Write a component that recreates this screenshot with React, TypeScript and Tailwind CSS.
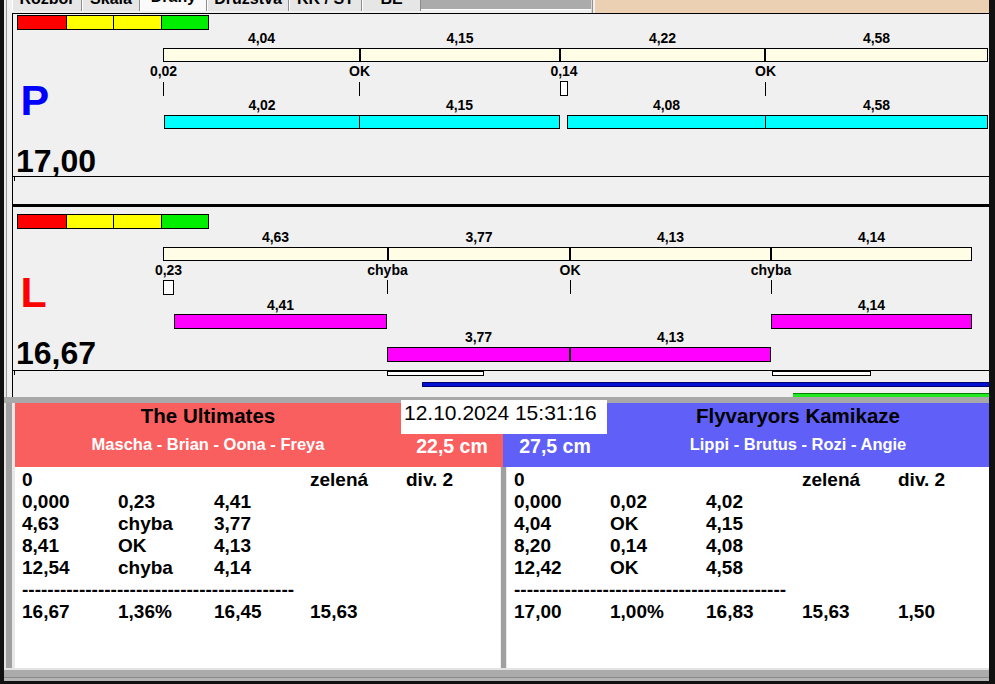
import React from "react";

const X0 = 13;

type Seg = [number, number];

function Box({ x1, x2, y1, y2, y0, cls }: { x1: number; x2: number; y1: number; y2: number; y0: number; cls: string }) {
  return <div className={`absolute ${cls}`} style={{ left: x1 - X0, top: y1 - y0, width: x2 - x1, height: y2 - y1 }} />;
}

function Lbl({ cx, top, y0, text }: { cx: number; top: number; y0: number; text: string }) {
  return (
    <div
      className="absolute w-[80px] text-center text-[14px] leading-[16px] font-bold text-black whitespace-nowrap"
      style={{ left: cx - X0 - 40, top: top - y0 }}
    >
      {text}
    </div>
  );
}

function ColorBar({ top, y0 }: { top: number; y0: number }) {
  return (
    <div className="absolute flex h-[15px] border border-black" style={{ left: 17 - X0, top: top - y0 }}>
      <div className="w-[48px] bg-[#ff0000]" />
      <div className="w-[47px] bg-[#ffff00] border-l border-black" />
      <div className="w-[48px] bg-[#ffff00] border-l border-black" />
      <div className="w-[47px] bg-[#00ee00] border-l border-black" />
    </div>
  );
}

function Segs({ segs, y1, y2, y0, cls }: { segs: Seg[]; y1: number; y2: number; y0: number; cls: string }) {
  return (
    <>
      {segs.map(([a, b], i) => (
        <Box key={i} x1={a} x2={b} y1={y1} y2={y2} y0={y0} cls={`border border-black ${cls}`} />
      ))}
    </>
  );
}

function Labels({ items, top, y0 }: { items: [number, string][]; top: number; y0: number }) {
  return (
    <>
      {items.map(([cx, t], i) => (
        <Lbl key={i} cx={cx} top={top} y0={y0} text={t} />
      ))}
    </>
  );
}

function Ticks({ xs, y1, y2, y0 }: { xs: number[]; y1: number; y2: number; y0: number }) {
  return (
    <>
      {xs.map((x, i) => (
        <Box key={i} x1={x} x2={x + 1} y1={y1} y2={y2} y0={y0} cls="bg-black" />
      ))}
    </>
  );
}

function PanelP() {
  const y0 = 14;
  return (
    <div className="relative h-[191px] border-t border-l border-black bg-[#f0f0f0] overflow-hidden">
      <ColorBar top={15} y0={y0} />
      <Labels top={30} y0={y0} items={[[261.5, "4,04"], [460, "4,15"], [662.5, "4,22"], [876.5, "4,58"]]} />
      <Segs segs={[[163, 360], [360, 560], [560, 765], [765, 988]]} y1={48} y2={62} y0={y0} cls="bg-[#fffde6]" />
      <Labels top={63} y0={y0} items={[[163.5, "0,02"], [359.5, "OK"], [564, "0,14"], [765.5, "OK"]]} />
      <Ticks xs={[163, 359, 765]} y1={82} y2={96} y0={y0} />
      <Box x1={560} x2={568} y1={81} y2={96} y0={y0} cls="bg-white border border-black" />
      <div
        className="absolute text-[43px] leading-[43px] font-bold text-[#0000ff]"
        style={{ left: 20.5 - X0, top: 78.5 - y0 }}
      >
        P
      </div>
      <Labels top={96.5} y0={y0} items={[[262, "4,02"], [459.5, "4,15"], [666.5, "4,08"], [876.5, "4,58"]]} />
      <Segs segs={[[164, 360], [359, 560], [567, 766], [765, 988]]} y1={115} y2={129} y0={y0} cls="bg-[#00ffff]" />
      <div className="absolute text-[32px] leading-[32px] font-bold text-black" style={{ left: 3, top: 145 - y0 }}>
        17,00
      </div>
      <Box x1={13} x2={989} y1={176} y2={177} y0={y0} cls="bg-black" />
      <Box x1={14} x2={15} y1={177} y2={181} y0={y0} cls="bg-black" />
    </div>
  );
}

function PanelL() {
  const y0 = 207;
  return (
    <div className="relative h-[190px] border-l border-black bg-[#f0f0f0] overflow-hidden">
      <ColorBar top={214} y0={y0} />
      <Labels top={229} y0={y0} items={[[275.5, "4,63"], [479, "3,77"], [670.5, "4,13"], [871.5, "4,14"]]} />
      <Segs segs={[[163, 388], [388, 570], [570, 771], [771, 972]]} y1={247} y2={261} y0={y0} cls="bg-[#fffde6]" />
      <Labels top={261.5} y0={y0} items={[[168.5, "0,23"], [387.5, "chyba"], [570, "OK"], [771, "chyba"]]} />
      <Ticks xs={[387, 570, 771]} y1={280} y2={294} y0={y0} />
      <Box x1={163} x2={174} y1={280} y2={295} y0={y0} cls="bg-white border border-black" />
      <div
        className="absolute text-[43px] leading-[43px] font-bold text-[#ff0000]"
        style={{ left: 20.6 - X0, top: 270.5 - y0 }}
      >
        L
      </div>
      <Labels top={296.5} y0={y0} items={[[280.5, "4,41"], [871.5, "4,14"]]} />
      <Segs segs={[[174, 387], [771, 972]]} y1={314} y2={329} y0={y0} cls="bg-[#ff00ff]" />
      <Labels top={329} y0={y0} items={[[478.5, "3,77"], [670.5, "4,13"]]} />
      <Segs segs={[[387, 570], [570, 771]]} y1={347} y2={362} y0={y0} cls="bg-[#ff00ff]" />
      <div className="absolute text-[32px] leading-[32px] font-bold text-black" style={{ left: 3, top: 337 - y0 }}>
        16,67
      </div>
      <Box x1={13} x2={989} y1={370} y2={371} y0={y0} cls="bg-black" />
      <Box x1={14} x2={15} y1={371} y2={375} y0={y0} cls="bg-black" />
      <Box x1={387} x2={484} y1={371} y2={376} y0={y0} cls="bg-white border border-black" />
      <Box x1={772} x2={871} y1={371} y2={376} y0={y0} cls="bg-white border border-black" />
      <Box x1={422} x2={990} y1={382} y2={387} y0={y0} cls="bg-[#0010d0] border border-[#000070]" />
      <Box x1={793} x2={990} y1={393} y2={397} y0={y0} cls="bg-[#22e822] border-t border-[#008000]" />
    </div>
  );
}

function Tab({ w, label, selected }: { w: string; label: string; selected?: boolean }) {
  return (
    <div
      className={`${w} h-[11px] overflow-hidden border-l border-white border-r border-r-[#8c8c8c] text-center text-[16px] leading-[17px] font-bold text-black whitespace-nowrap ${
        selected ? "bg-[#fafafa]" : "bg-[#e6e6e6]"
      }`}
    >
      <div className={selected ? "-mt-[12px]" : "-mt-[10px]"}>{label}</div>
    </div>
  );
}

function TabStrip() {
  return (
    <div className="h-[13px] flex bg-[#f0f0f0] overflow-hidden">
      <Tab w="w-[70px]" label="Rozbor" />
      <Tab w="w-[58px]" label="Skála" />
      <Tab w="w-[67px]" label="Dráhy" selected />
      <Tab w="w-[82px]" label="Družstva" />
      <Tab w="w-[73px]" label="KK / ST" />
      <Tab w="w-[59px]" label="BE" />
      <div className="w-[170px] flex flex-col">
        <div className="h-[9px] bg-[#ababab]" />
        <div className="h-[1px] bg-white" />
        <div className="flex-1 bg-[#f0f0f0]" />
      </div>
      <div className="w-[4px] flex">
        <div className="w-[1px] bg-[#d8d8d8]" />
        <div className="w-[1px] bg-[#909090]" />
        <div className="flex-1 bg-[#f0f0f0]" />
      </div>
      <div className="flex-1 bg-[#ecd0b4]" />
    </div>
  );
}

const DASH = "-".repeat(43);

type Row = string[] | "dash";

function ScrollBar({ w }: { w: string }) {
  return (
    <div className={`${w} bg-[#f0f0f0] flex flex-col items-center justify-between pt-[6px] pb-[6px]`}>
      <svg width="9" height="6" viewBox="0 0 9 6">
        <path d="M1 5 L4.5 1.5 L8 5" stroke="#a0a0a0" strokeWidth="1.2" fill="none" />
      </svg>
      <svg width="9" height="6" viewBox="0 0 9 6">
        <path d="M1 1 L4.5 4.5 L8 1" stroke="#a0a0a0" strokeWidth="1.2" fill="none" />
      </svg>
    </div>
  );
}

function List({ rows, w, sb }: { rows: Row[]; w: string; sb: string }) {
  return (
    <div className={`${w} bg-white flex`}>
      <div className="flex-1 pl-[7px] pt-[2px] text-[19px] leading-[22px] font-bold text-black">
        {rows.map((r, i) =>
          r === "dash" ? (
            <div key={i} className="whitespace-nowrap">
              {DASH}
            </div>
          ) : (
            <div key={i} className="grid grid-cols-[96px_96px_96px_96px_96px] whitespace-nowrap">
              {r.map((c, j) => (
                <div key={j}>{c}</div>
              ))}
            </div>
          )
        )}
      </div>
      <ScrollBar w={sb} />
    </div>
  );
}

const leftRows: Row[] = [
  ["0", "", "", "zelená", "div. 2"],
  ["0,000", "0,23", "4,41"],
  ["4,63", "chyba", "3,77"],
  ["8,41", "OK", "4,13"],
  ["12,54", "chyba", "4,14"],
  "dash",
  ["16,67", "1,36%", "16,45", "15,63"],
];

const rightRows: Row[] = [
  ["0", "", "", "zelená", "div. 2"],
  ["0,000", "0,02", "4,02"],
  ["4,04", "OK", "4,15"],
  ["8,20", "0,14", "4,08"],
  ["12,42", "OK", "4,58"],
  "dash",
  ["17,00", "1,00%", "16,83", "15,63", "1,50"],
];

const RED = "bg-[#fa5f5f]";
const BLUE = "bg-[#6060f8]";

function Header() {
  return (
    <div className="h-[64px] flex">
      <div className={`w-[386px] ${RED} flex flex-col items-center`}>
        <div className="mt-[2px] text-[20.5px] leading-[21px] font-bold text-black whitespace-nowrap">The Ultimates</div>
        <div className="mt-[10px] text-[16.5px] leading-[17px] font-bold text-white whitespace-nowrap">
          Mascha - Brian - Oona - Freya
        </div>
      </div>
      <div className="w-[206px] flex flex-col">
        <div className="h-[34px] -mt-[3px] bg-white pl-[3px] pt-[2px] text-[21px] leading-[21px] text-black whitespace-nowrap">
          12.10.2024 15:31:16
        </div>
        <div className="flex-1 flex">
          <div className={`w-[102px] ${RED} pt-[2px] text-center text-[19.5px] leading-[20px] font-bold text-white whitespace-nowrap`}>
            22,5 cm
          </div>
          <div className={`flex-1 ${BLUE} pt-[2px] text-center text-[19.5px] leading-[20px] font-bold text-white whitespace-nowrap`}>
            27,5 cm
          </div>
        </div>
      </div>
      <div className={`flex-1 ${BLUE} flex flex-col items-center`}>
        <div className="mt-[2px] text-[20.5px] leading-[21px] font-bold text-black whitespace-nowrap">
          Flyvaryors Kamikaze
        </div>
        <div className="mt-[10px] text-[16.5px] leading-[17px] font-bold text-white whitespace-nowrap">
          Lippi - Brutus - Rozi - Angie
        </div>
      </div>
    </div>
  );
}

export default function App() {
  return (
    <div className="w-[995px] h-[684px] overflow-hidden bg-[#111] flex font-['Liberation_Sans',Arial,sans-serif] text-black">
      <div className="w-[4px] shrink-0 bg-[#111]" />
      <div className="w-[985px] shrink-0 flex flex-col">
        <div className="h-[397px] flex">
          <div className="w-[8px] flex">
            <div className="w-[2px] bg-[#e8e8e8]" />
            <div className="w-[1px] bg-[#9a9a9a]" />
            <div className="flex-1 bg-[#f0f0f0]" />
          </div>
          <div className="w-[977px] flex flex-col">
            <TabStrip />
            <PanelP />
            <div className="h-[3px] bg-black" />
            <PanelL />
          </div>
        </div>
        <div className="h-[6px] bg-[#a8a8a8]" />
        <div className="h-[265px] flex">
          <div className="w-[11px] flex">
            <div className="w-[2px] bg-[#e3e3e3]" />
            <div className="w-[6px] bg-[#a0a0a0]" />
            <div className="flex-1 bg-[#e8e8e8]" />
          </div>
          <div className="w-[974px] flex flex-col">
            <Header />
            <div className="h-[201px] flex">
              <List rows={leftRows} w="w-[485px]" sb="w-[17px]" />
              <div className="w-[7px] flex">
                <div className="w-[1px] bg-[#f0f0f0]" />
                <div className="w-[5px] bg-[#a0a0a0]" />
                <div className="flex-1 bg-[#e8e8e8]" />
              </div>
              <List rows={rightRows} w="w-[482px]" sb="w-[15px]" />
            </div>
          </div>
        </div>
        <div className="h-[2px] bg-[#e3e3e3]" />
        <div className="h-[7px] bg-[#ababab]" />
        <div className="h-[1px] bg-[#8a8a8a]" />
        <div className="h-[3px] bg-[#b5b5b5]" />
        <div className="h-[3px] bg-[#111]" />
      </div>
      <div className="w-[6px] shrink-0 bg-[#111]" />
    </div>
  );
}
